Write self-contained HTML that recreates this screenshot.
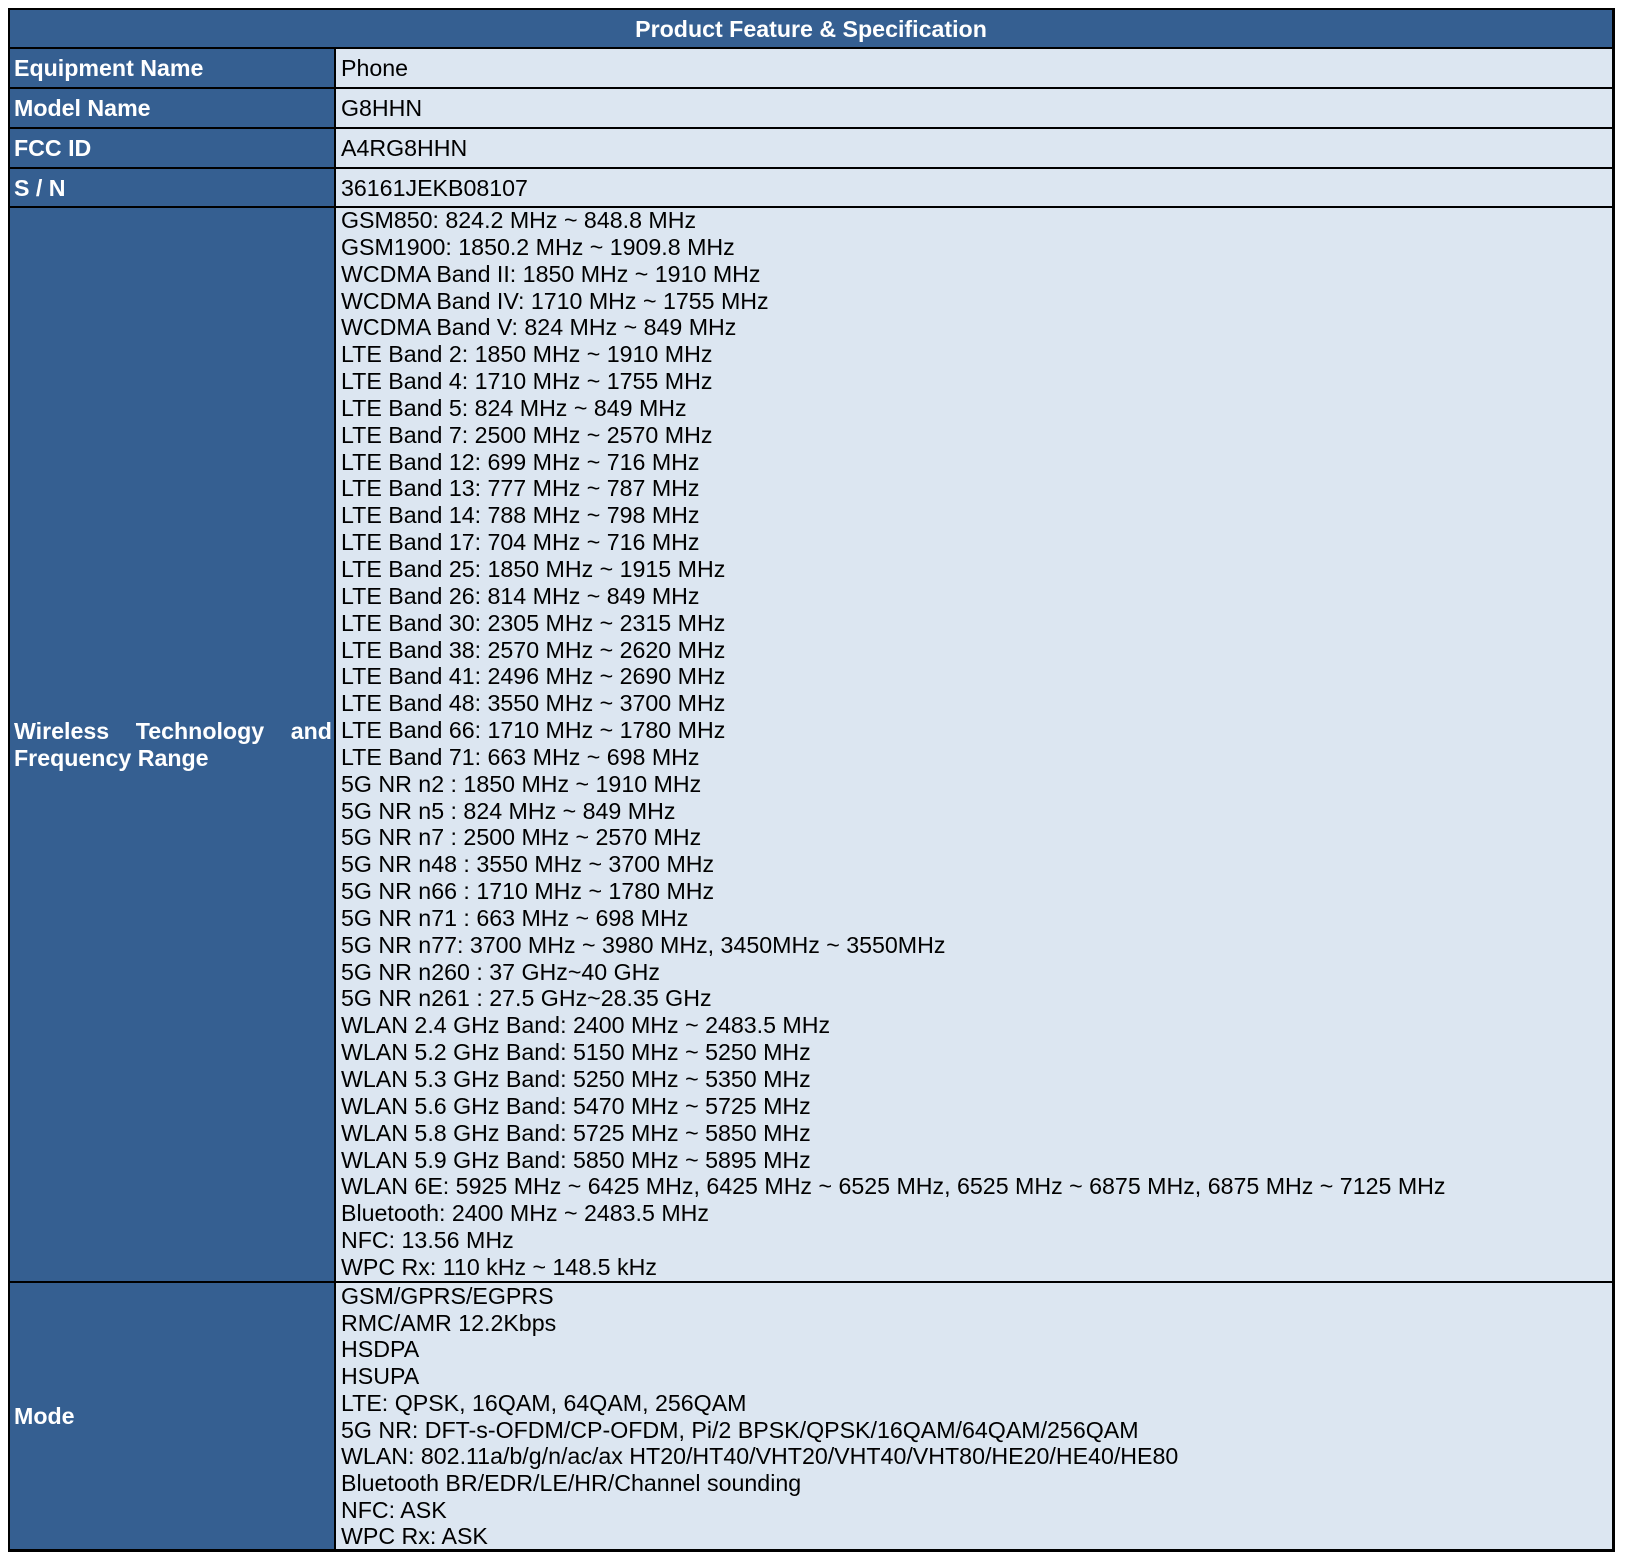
<!DOCTYPE html>
<html><head><meta charset="utf-8"><style>
body{margin:0;width:1626px;height:1566px;background:#fff;font-family:"Liberation Sans",Arial,sans-serif;font-size:23.2px;color:#000;position:relative;overflow:hidden}
.b{position:absolute;box-sizing:border-box;white-space:nowrap}
.h{background:#355f91;color:#fff;font-weight:bold}
.l{background:#355f91;color:#fff;font-weight:bold;padding-left:5px}
.r{background:#dce6f1;padding-left:6px}
.line{position:absolute;background:#000}
</style></head><body>
<div class="b h" style="left:9px;top:9px;width:1604px;height:39px;text-align:center;line-height:40px">Product Feature &amp; Specification</div>
<div class="b l" style="left:9px;top:48px;width:326px;height:40px;line-height:41px">Equipment Name</div>
<div class="b r" style="left:335px;top:48px;width:1278px;height:40px;line-height:41px">Phone</div>
<div class="b l" style="left:9px;top:88px;width:326px;height:40px;line-height:41px">Model Name</div>
<div class="b r" style="left:335px;top:88px;width:1278px;height:40px;line-height:41px">G8HHN</div>
<div class="b l" style="left:9px;top:128px;width:326px;height:40px;line-height:41px">FCC ID</div>
<div class="b r" style="left:335px;top:128px;width:1278px;height:40px;line-height:41px">A4RG8HHN</div>
<div class="b l" style="left:9px;top:168px;width:326px;height:39px;line-height:40px">S / N</div>
<div class="b r" style="left:335px;top:168px;width:1278px;height:39px;line-height:40px">36161JEKB08107</div>
<div class="b l" style="left:9px;top:207px;width:326px;height:1075px;display:flex;align-items:center;padding-right:3px"><div style="line-height:27px;width:100%"><span style="display:flex;justify-content:space-between"><span>Wireless</span><span>Technology</span><span>and</span></span>Frequency Range</div></div>
<div class="b r" style="left:335px;top:207px;width:1278px;height:1075px;line-height:26.85px;padding-top:0px">GSM850: 824.2 MHz ~ 848.8 MHz<br>GSM1900: 1850.2 MHz ~ 1909.8 MHz<br>WCDMA Band II: 1850 MHz ~ 1910 MHz<br>WCDMA Band IV: 1710 MHz ~ 1755 MHz<br>WCDMA Band V: 824 MHz ~ 849 MHz<br>LTE Band 2: 1850 MHz ~ 1910 MHz<br>LTE Band 4: 1710 MHz ~ 1755 MHz<br>LTE Band 5: 824 MHz ~ 849 MHz<br>LTE Band 7: 2500 MHz ~ 2570 MHz<br>LTE Band 12: 699 MHz ~ 716 MHz<br>LTE Band 13: 777 MHz ~ 787 MHz<br>LTE Band 14: 788 MHz ~ 798 MHz<br>LTE Band 17: 704 MHz ~ 716 MHz<br>LTE Band 25: 1850 MHz ~ 1915 MHz<br>LTE Band 26: 814 MHz ~ 849 MHz<br>LTE Band 30: 2305 MHz ~ 2315 MHz<br>LTE Band 38: 2570 MHz ~ 2620 MHz<br>LTE Band 41: 2496 MHz ~ 2690 MHz<br>LTE Band 48: 3550 MHz ~ 3700 MHz<br>LTE Band 66: 1710 MHz ~ 1780 MHz<br>LTE Band 71: 663 MHz ~ 698 MHz<br>5G NR n2 : 1850 MHz ~ 1910 MHz<br>5G NR n5 : 824 MHz ~ 849 MHz<br>5G NR n7 : 2500 MHz ~ 2570 MHz<br>5G NR n48 : 3550 MHz ~ 3700 MHz<br>5G NR n66 : 1710 MHz ~ 1780 MHz<br>5G NR n71 : 663 MHz ~ 698 MHz<br>5G NR n77: 3700 MHz ~ 3980 MHz, 3450MHz ~ 3550MHz<br>5G NR n260 : 37 GHz~40 GHz<br>5G NR n261 : 27.5 GHz~28.35 GHz<br>WLAN 2.4 GHz Band: 2400 MHz ~ 2483.5 MHz<br>WLAN 5.2 GHz Band: 5150 MHz ~ 5250 MHz<br>WLAN 5.3 GHz Band: 5250 MHz ~ 5350 MHz<br>WLAN 5.6 GHz Band: 5470 MHz ~ 5725 MHz<br>WLAN 5.8 GHz Band: 5725 MHz ~ 5850 MHz<br>WLAN 5.9 GHz Band: 5850 MHz ~ 5895 MHz<br>WLAN 6E: 5925 MHz ~ 6425 MHz, 6425 MHz ~ 6525 MHz, 6525 MHz ~ 6875 MHz, 6875 MHz ~ 7125 MHz<br>Bluetooth: 2400 MHz ~ 2483.5 MHz<br>NFC: 13.56 MHz<br>WPC Rx: 110 kHz ~ 148.5 kHz</div>
<div class="b l" style="left:9px;top:1282px;width:326px;height:268px;display:flex;align-items:center">Mode</div>
<div class="b r" style="left:335px;top:1282px;width:1278px;height:268px;line-height:26.7px;padding-top:1px">GSM/GPRS/EGPRS<br>RMC/AMR 12.2Kbps<br>HSDPA<br>HSUPA<br>LTE: QPSK, 16QAM, 64QAM, 256QAM<br>5G NR: DFT-s-OFDM/CP-OFDM, Pi/2 BPSK/QPSK/16QAM/64QAM/256QAM<br>WLAN: 802.11a/b/g/n/ac/ax HT20/HT40/VHT20/VHT40/VHT80/HE20/HE40/HE80<br>Bluetooth BR/EDR/LE/HR/Channel sounding<br>NFC: ASK<br>WPC Rx: ASK</div>
<div class="line" style="left:8px;top:8px;width:1607px;height:2px"></div>
<div class="line" style="left:8px;top:1549px;width:1607px;height:3px"></div>
<div class="line" style="left:8px;top:8px;width:2px;height:1544px"></div>
<div class="line" style="left:1612px;top:8px;width:3px;height:1544px"></div>
<div class="line" style="left:8px;top:47px;width:1607px;height:2px"></div>
<div class="line" style="left:8px;top:87px;width:1607px;height:2px"></div>
<div class="line" style="left:8px;top:127px;width:1607px;height:2px"></div>
<div class="line" style="left:8px;top:167px;width:1607px;height:2px"></div>
<div class="line" style="left:8px;top:206px;width:1607px;height:2px"></div>
<div class="line" style="left:8px;top:1281px;width:1607px;height:2px"></div>
<div class="line" style="left:334px;top:47px;width:2px;height:1504px"></div>
</body></html>
